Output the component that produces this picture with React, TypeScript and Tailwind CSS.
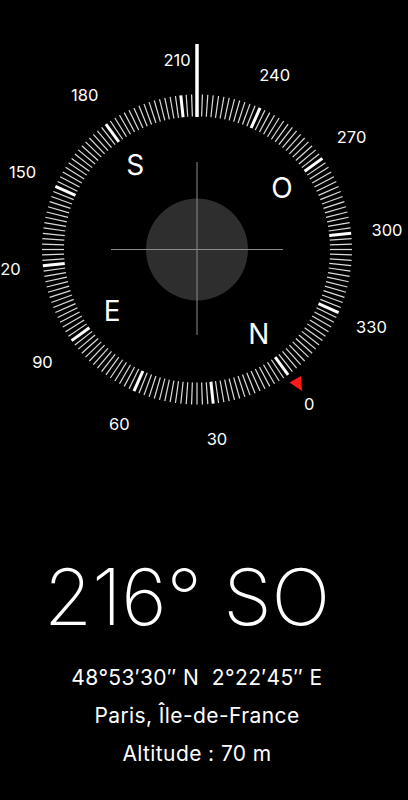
const CX = 197;
const CY = 249.5;

function polar(deg: number, r: number) {
  // deg on dial, screen angle = deg - heading, clockwise from top
  const a = ((deg - 216) * Math.PI) / 180;
  return { x: CX + r * Math.sin(a), y: CY - r * Math.cos(a) };
}

const ticks = Array.from({ length: 180 }, (_, i) => i * 2);
const labels = [0, 30, 60, 90, 120, 150, 180, 210, 240, 270, 300, 330];
const cardinals = [
  { t: "N", d: 0 },
  { t: "E", d: 90 },
  { t: "S", d: 180 },
  { t: "O", d: 270 },
];

function Dial() {
  return (
    <svg width="408" height="470" viewBox="0 0 408 470" className="block">
      {ticks.map((d) => {
        const major = d % 30 === 0;
        const a = polar(d, 133);
        const b = polar(d, 155);
        return (
          <line
            key={d}
            x1={a.x}
            y1={a.y}
            x2={b.x}
            y2={b.y}
            stroke={major ? "#ffffff" : "#dcdcdc"}
            strokeWidth={major ? 3 : 1.2}
          />
        );
      })}
      <line x1={CX} y1={44} x2={CX} y2={117} stroke="#fff" strokeWidth={3.5} />
      {labels.map((d) => {
        const p = polar(d, 191);
        return (
          <text
            key={d}
            x={p.x}
            y={p.y}
            textAnchor="middle"
            dominantBaseline="central"
            fill="#fff"
            fontSize={16.5}
            fontFamily="Inter, 'Liberation Sans', sans-serif"
          >
            {d}
          </text>
        );
      })}
      {cardinals.map((c) => {
        const p = polar(c.d, 105);
        return (
          <text
            key={c.t}
            x={p.x}
            y={p.y}
            textAnchor="middle"
            dominantBaseline="central"
            fill="#fff"
            fontSize={28}
            fontFamily="Inter, 'Liberation Sans', sans-serif"
          >
            {c.t}
          </text>
        );
      })}
      <circle cx={CX} cy={CY} r={51} fill="#2e2e2e" />
      <line x1={CX} y1={162} x2={CX} y2={335} stroke="#8c8c8c" strokeWidth={1} />
      <line x1={111} y1={CY} x2={283} y2={CY} stroke="#8c8c8c" strokeWidth={1} />
      <polygon points="289.5,382.5 301,376 302,391" fill="#ff1a1a" />
    </svg>
  );
}

export default function App() {
  return (
    <div className="w-[408px] h-[800px] bg-black text-white overflow-hidden font-['Inter','Liberation_Sans',sans-serif]">
      <Dial />
      <div className="flex justify-center pr-[34px] mt-[88px]">
        <span className="text-[78px] leading-[78px] font-extralight tracking-[-0.3px]">
          216° SO
        </span>
      </div>
      <div className="flex flex-col items-center pr-[14px] mt-[23px] text-[21px] leading-[38px] tracking-[0.4px]">
        <span>48°53′30″ N&nbsp;&nbsp;2°22′45″ E</span>
        <span>Paris, Île-de-France</span>
        <span>Altitude : 70 m</span>
      </div>
    </div>
  );
}
